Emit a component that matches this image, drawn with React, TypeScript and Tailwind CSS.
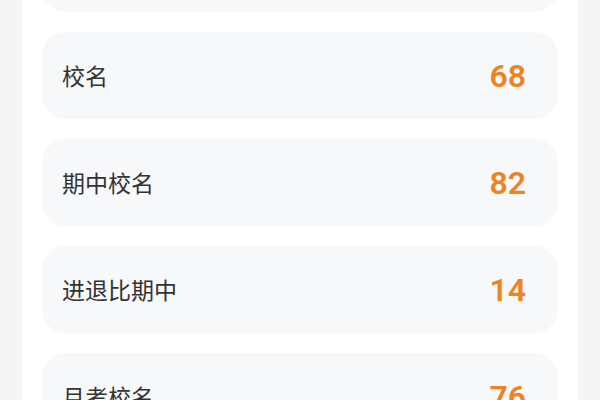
const rows = [
  { label: "校名", value: 68 },
  { label: "期中校名", value: 82 },
  { label: "进退比期中", value: 14 },
  { label: "月考校名", value: 76 },
];

export default function App() {
  return (
    <div className="h-[400px] w-[600px] overflow-hidden bg-[#f5f5f5] px-[22px]">
      <div className="h-full overflow-hidden bg-white px-5">
        <div className="-mt-[75px] flex flex-col gap-5">
          {/* card above the fold, only its bottom edge shows */}
          <div className="h-[87px] rounded-3xl bg-[#f7f8fa]" />
          {rows.map((row) => (
            <div
              key={row.label}
              className="flex h-[87px] items-center justify-between rounded-3xl bg-[#f7f8fa] pl-5 pr-8"
            >
              <span className="font-['Noto_Sans_CJK_SC',sans-serif] text-[23px] text-[#333333]">
                {row.label}
              </span>
              <span className="font-['Roboto',sans-serif] text-[32px] font-semibold text-[#ee8322]">
                {row.value}
              </span>
            </div>
          ))}
        </div>
      </div>
    </div>
  );
}
